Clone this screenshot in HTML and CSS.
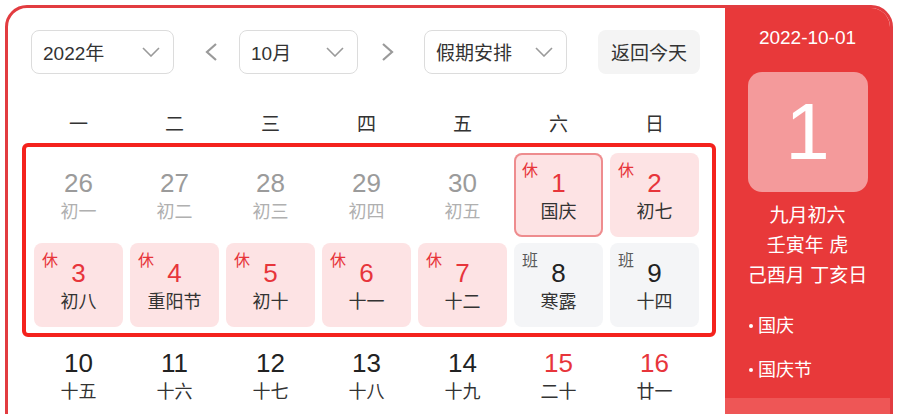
FILE: index.html
```html
<!DOCTYPE html>
<html lang="zh-CN">
<head>
<meta charset="utf-8">
<title>万年历</title>
<link rel="stylesheet" href="styles.css">
</head>
<body>
<div class="card">
  <div class="main">
    <div class="toolbar">
      <div class="select sel-year"><span>2022年</span><svg class="chev" viewBox="0 0 18 10" width="18" height="10"><path d="M1 1 L9 9 L17 1"/></svg></div>
      <span class="nav nav-prev"><svg viewBox="0 0 12 18" width="12" height="18"><path d="M11 1 L2 9 L11 17"/></svg></span>
      <div class="select sel-month"><span>10月</span><svg class="chev" viewBox="0 0 18 10" width="18" height="10"><path d="M1 1 L9 9 L17 1"/></svg></div>
      <span class="nav nav-next"><svg viewBox="0 0 12 18" width="12" height="18"><path d="M1 1 L10 9 L1 17"/></svg></span>
      <div class="select sel-holiday"><span>假期安排</span><svg class="chev" viewBox="0 0 18 10" width="18" height="10"><path d="M1 1 L9 9 L17 1"/></svg></div>
      <button class="today">返回今天</button>
    </div>
    <div class="weekdays">
      <span>一</span><span>二</span><span>三</span><span>四</span><span>五</span><span>六</span><span>日</span>
    </div>
    <div class="days">
      <div class="cell other"><span class="num">26</span><span class="lunar">初一</span></div>
      <div class="cell other"><span class="num">27</span><span class="lunar">初二</span></div>
      <div class="cell other"><span class="num">28</span><span class="lunar">初三</span></div>
      <div class="cell other"><span class="num">29</span><span class="lunar">初四</span></div>
      <div class="cell other"><span class="num">30</span><span class="lunar">初五</span></div>
      <div class="cell rest selected"><span class="tag">休</span><span class="num">1</span><span class="lunar">国庆</span></div>
      <div class="cell rest"><span class="tag">休</span><span class="num">2</span><span class="lunar">初七</span></div>
      <div class="cell rest"><span class="tag">休</span><span class="num">3</span><span class="lunar">初八</span></div>
      <div class="cell rest"><span class="tag">休</span><span class="num">4</span><span class="lunar">重阳节</span></div>
      <div class="cell rest"><span class="tag">休</span><span class="num">5</span><span class="lunar">初十</span></div>
      <div class="cell rest"><span class="tag">休</span><span class="num">6</span><span class="lunar">十一</span></div>
      <div class="cell rest"><span class="tag">休</span><span class="num">7</span><span class="lunar">十二</span></div>
      <div class="cell work"><span class="tag">班</span><span class="num">8</span><span class="lunar">寒露</span></div>
      <div class="cell work"><span class="tag">班</span><span class="num">9</span><span class="lunar">十四</span></div>
      <div class="cell"><span class="num">10</span><span class="lunar">十五</span></div>
      <div class="cell"><span class="num">11</span><span class="lunar">十六</span></div>
      <div class="cell"><span class="num">12</span><span class="lunar">十七</span></div>
      <div class="cell"><span class="num">13</span><span class="lunar">十八</span></div>
      <div class="cell"><span class="num">14</span><span class="lunar">十九</span></div>
      <div class="cell weekend"><span class="num">15</span><span class="lunar">二十</span></div>
      <div class="cell weekend"><span class="num">16</span><span class="lunar">廿一</span></div>
    </div>
    <div class="highlight"></div>
  </div>
  <aside class="side">
    <div class="side-date">2022-10-01</div>
    <div class="side-day">1</div>
    <div class="side-lunar">
      <div>九月初六</div>
      <div>壬寅年 虎</div>
      <div>己酉月 丁亥日</div>
    </div>
    <ul class="side-fest">
      <li>国庆</li>
      <li>国庆节</li>
    </ul>
    <div class="side-band"></div>
  </aside>
</div>
</body>
</html>
```
FILE: styles.css
```css
* { box-sizing: border-box; }

html, body {
  margin: 0;
  padding: 0;
  background: #ffffff;
  overflow: hidden;
}

body {
  font-family: "Liberation Sans", "Noto Sans CJK SC", sans-serif;
  color: #333333;
}

.card {
  margin: 5px;
  width: 888px;
  height: 440px;
  border: 3px solid #e23c40;
  border-radius: 22px;
  display: flex;
  overflow: hidden;
  background: #ffffff;
}

.main {
  position: relative;
  width: 717px;
  flex: none;
}

.toolbar {
  display: flex;
  align-items: center;
  padding: 22px 0 0 23px;
  height: 66px;
}

.select {
  height: 44px;
  border: 1px solid #dcdcdc;
  border-radius: 8px;
  display: flex;
  align-items: center;
  justify-content: space-between;
  padding: 0 13px 2px 11px;
  font-size: 19px;
  color: #333333;
}

.select .chev { margin-top: 2px; }

.sel-year { width: 143px; }
.sel-month { width: 119px; }
.sel-holiday { width: 143px; }

.chev path {
  fill: none;
  stroke: #9a9a9a;
  stroke-width: 1.6;
}

.nav {
  display: flex;
  align-items: center;
}
.nav svg path {
  fill: none;
  stroke: #9a9a9a;
  stroke-width: 2.2;
}
.nav-prev { margin: 0 22px 0 31px; }
.nav-next { margin: 0 30px 0 24px; }

.today {
  margin-left: 31px;
  width: 102px;
  height: 44px;
  border: none;
  border-radius: 8px;
  background: #f4f4f4;
  font-family: "Liberation Sans", "Noto Sans CJK SC", sans-serif;
  font-size: 19px;
  color: #333333;
  padding: 0 0 2px 0;
}

.weekdays {
  display: grid;
  grid-template-columns: repeat(7, 89px);
  column-gap: 7px;
  margin: 39px 0 0 26px;
  height: 24px;
  line-height: 24px;
  font-size: 19px;
  color: #333333;
  text-align: center;
}

.days {
  display: grid;
  grid-template-columns: repeat(7, 89px);
  grid-auto-rows: 84px;
  column-gap: 7px;
  row-gap: 6px;
  margin: 16px 0 0 26px;
}

.cell {
  position: relative;
  border-radius: 8px;
  display: flex;
  flex-direction: column;
  align-items: center;
  padding-top: 15px;
}

.num {
  font-size: 26px;
  line-height: 30px;
  color: #222222;
}

.lunar {
  font-size: 18px;
  line-height: 28px;
  color: #333333;
}

.other .num { color: #9b9b9b; }
.other .lunar { color: #b0b0b0; }

.rest { background: #fde3e4; }
.rest .num { color: #e7353b; }

.work { background: #f4f5f7; }

.weekend .num { color: #e7353b; }

.selected { box-shadow: inset 0 0 0 2px #ee8c8e; }

.tag {
  position: absolute;
  left: 8px;
  top: 8px;
  font-size: 16px;
  line-height: 20px;
}
.rest .tag { color: #e7353b; }
.work .tag { color: #5a5a5a; }

.highlight {
  position: absolute;
  left: 14px;
  top: 135px;
  width: 694px;
  height: 194px;
  border: 4px solid #f4221d;
  border-radius: 6px;
  pointer-events: none;
}

.side {
  flex: 1;
  background: #e8393a;
  color: #ffffff;
  display: flex;
  flex-direction: column;
  align-items: center;
  padding-top: 17px;
}

.side-date {
  font-size: 19px;
  line-height: 26px;
}

.side-day {
  margin-top: 21px;
  width: 120px;
  height: 120px;
  border-radius: 14px;
  background: #f49a9b;
  font-size: 80px;
  line-height: 120px;
  text-align: center;
}

.side-lunar {
  margin-top: 9px;
  text-align: center;
  font-size: 19px;
  line-height: 30px;
}

.side-fest {
  list-style: none;
  margin: 13px 0 0 0;
  padding: 0 0 0 24px;
  align-self: stretch;
}

.side-fest li {
  position: relative;
  font-size: 18px;
  line-height: 44px;
  padding-left: 9px;
}

.side-fest li::before {
  content: "";
  position: absolute;
  left: 0;
  top: 20px;
  width: 4px;
  height: 4px;
  border-radius: 50%;
  background: #ffffff;
}

.side-band {
  margin-top: 6px;
  align-self: stretch;
  flex: 1;
  background: #ee5656;
}
```
